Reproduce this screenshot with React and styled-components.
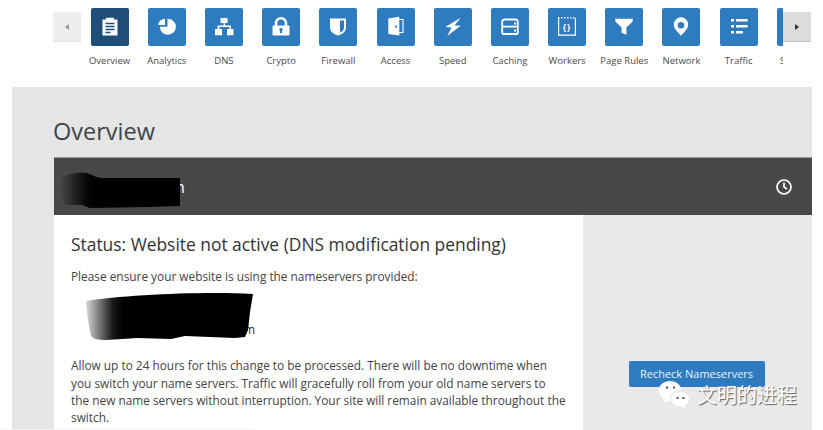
import React from 'react';
import styled, {createGlobalStyle} from 'styled-components';

const GlobalStyle = createGlobalStyle`
html, body {
  margin:0;
  padding:0;
  background:#fff;
  height:430px;
  overflow:hidden;
}
body {
  font-family:"Open Sans", "Noto Sans", sans-serif;
  color:#3d3d3d;
}
`
const Page = styled.div`
position:relative;
width:823px;
height:430px;
overflow:hidden;
`
const Nav = styled.nav`
display:flex;
height:87px;
padding-left:53px;
`
const Arrow = styled.button`
flex:none;
width:28px;
height:30px;
margin-top:12px;
padding:0;
display:flex;
align-items:center;
justify-content:center;
border:0;
border-bottom:1px solid ${props => props.$active ? '#bdbdbd' : '#e2e2e2'};
background:${props => props.$active ? '#dcdcdc' : '#eeeeee'};
`
const Triangle = styled.span`
width:0;
height:0;
border-top:3px solid transparent;
border-bottom:3px solid transparent;
${props => props.$right
  ? 'border-left:4px solid #333;'
  : 'border-right:4px solid #999;'}
`
const Scroller = styled.div`
flex:none;
width:702px;
display:flex;
overflow:hidden;
`
const NavItem = styled.div`
flex:none;
width:57.2px;
display:flex;
flex-direction:column;
align-items:center;
padding-top:8px;
`
const IconBox = styled.div`
width:38px;
height:38px;
border-radius:2px;
background:${props => props.$active ? '#1f4e79' : '#2f7bbf'};
`
const NavLabel = styled.span`
margin-top:7px;
font-size:9.5px;
line-height:16px;
white-space:nowrap;
color:#4a4a4a;
`
const Panel = styled.main`
width:759px;
height:343px;
margin-left:12px;
padding-left:41px;
background:#e5e5e5;
`
const Title = styled.h1`
margin:0;
padding-top:28px;
height:42px;
font-size:23.5px;
line-height:33px;
font-weight:400;
color:#3f4548;
`
const CardHeader = styled.header`
position:relative;
display:flex;
align-items:center;
justify-content:space-between;
box-sizing:border-box;
width:758px;
height:58px;
margin-left:1px;
padding:0 19px 0 121px;
background:#484848;
border-top:1px solid #9a9a9a;
color:#fff;
font-size:16px;
`
const CardBody = styled.section`
display:flex;
width:758px;
margin-left:1px;
`
const Content = styled.div`
box-sizing:border-box;
width:529px;
height:216px;
padding:17px 17px 0;
background:#fff;
font-size:11.85px;
line-height:17.3px;
color:#444;
`
const Status = styled.h2`
margin:0 0 12px;
font-size:17.4px;
line-height:24px;
font-weight:400;
color:#333;
`
const Text = styled.p`
margin:0;
`
const Servers = styled.div`
position:relative;
height:64px;
margin:4px 0 4px;
`
const Side = styled.aside`
flex:1;
height:216px;
display:flex;
justify-content:center;
padding-right:2px;
background:#e9e9e9;
`
const Recheck = styled.button`
width:136px;
height:26px;
margin-top:146px;
padding:0 0 2px;
border:0;
border-radius:2px;
background:#2f7bbf;
color:#e8f2fa;
font-family:inherit;
font-size:11px;
`
const Scribble = styled.svg`
position:absolute;
display:block;
left:${props => props.$left}px;
top:${props => props.$top}px;
`
const Watermark = styled.div`
position:absolute;
left:658px;
top:380px;
display:flex;
align-items:center;
gap:7px;
color:#fff;
font-family:"Noto Sans CJK SC", sans-serif;
font-size:20px;
line-height:28px;
text-shadow:1px 1px 1px rgba(0,0,0,.6);
`
const BottomEdge = styled.div`
position:absolute;
left:0;
bottom:0;
width:255px;
height:1px;
background:#f4f4f4;
`

const w = '#fff'
const b = '#2f7bbf'

const icons = {
  overview: (active) => (
    <>
      <path fill={w} d="M11.500 11.500h3.500v-1.800h8v1.800h3.500v16h-15z"/>
      <path stroke={active} strokeWidth="1.300" d="M14.500 15.500h9M14.500 18.500h9M14.500 21.500h9M14.500 24.500h5"/>
    </>
  ),
  analytics: () => (
    <>
      <path fill={w} d="M17 10.700a6.700 6.700 0 0 0-6.700 6.400h6.700z"/>
      <path fill={w} d="M19.500 10.800a8 8 0 1 1-7.600 8h7.600z"/>
    </>
  ),
  dns: () => (
    <path fill={w} d="M15.500 10h7v5h-2.600v2.600h6.100v3.400h2.500v6.200h-6.500v-6.200h2.500v-1.900h-10v1.900h2.500v6.200H10v-6.200h2.500v-3.400h6.100V15h-3.100z"/>
  ),
  crypto: () => (
    <>
      <path fill="none" stroke={w} strokeWidth="2.600" d="M14 18.500v-3.200a5 5 0 0 1 10 0v3.200"/>
      <rect fill={w} x="10.500" y="17.500" width="17" height="10" rx="1"/>
      <path fill={b} d="M19 20a1.700 1.700 0 0 1 1 3.100v2h-2v-2a1.700 1.700 0 0 1 1-3.100z"/>
    </>
  ),
  firewall: () => (
    <>
      <path fill={w} d="M11 10.500h16v9c0 4-3.500 6.700-8 8-4.500-1.300-8-4-8-8z"/>
      <path fill={b} d="M21 12.500h4v7c0 2.500-1.700 4.200-4 5.300z"/>
    </>
  ),
  access: () => (
    <>
      <path fill={w} d="M11.300 10.500l11-1.700v18.600l-11-1.300z"/>
      <path fill="none" stroke={w} strokeWidth="1.100" d="M22 11.500h4v13h-4"/>
      <circle fill={b} cx="19" cy="18.700" r="1.100"/>
    </>
  ),
  speed: () => (
    <path fill={w} d="M26.700 9.700L11.300 19l6.200.5L13.300 28l13.400-10.200-6.200-.3z"/>
  ),
  caching: () => (
    <>
      <path fill="none" stroke={w} strokeWidth="1.800" d="M13.500 11.500h11a2.300 2.300 0 0 1 2.300 2.300v10.900a1.300 1.300 0 0 1-1.300 1.300h-13a1.300 1.300 0 0 1-1.300-1.300V13.800a2.300 2.300 0 0 1 2.300-2.300zM11.200 18.700h15.600"/>
      <path fill={w} d="M23 14.500h2v2h-2zM23 21.500h2v2h-2z"/>
    </>
  ),
  workers: () => (
    <>
      <path fill="none" stroke={w} strokeWidth="1.200" d="M10.600 10v17.200h16.800V10"/>
      <path fill="none" stroke={w} strokeWidth="1.400" strokeDasharray="1.500 1.500" d="M10 9.700h18"/>
      <text x="19" y="22" textAnchor="middle" fill={w} fontFamily="Open Sans, sans-serif" fontWeight="700" fontSize="8.500" letterSpacing="1">{'{}'}</text>
    </>
  ),
  pagerules: () => (
    <path fill={w} d="M10.300 10.700h17.400v2.800l-6.300 6v7.300l-4.800-2v-5.300l-6.300-6z"/>
  ),
  network: () => (
    <path fill={w} fillRule="evenodd" d="M19 9.300a7.200 7.200 0 0 1 7.200 7.200c0 4.500-4.500 8-7.200 11.200-2.700-3.200-7.200-6.700-7.200-11.200A7.200 7.200 0 0 1 19 9.300zm0 4.700a3.300 3.300 0 1 0 0 6.600 3.300 3.300 0 0 0 0-6.600z"/>
  ),
  traffic: () => (
    <path fill={w} d="M11 11h3v2.400h-3zM16 11h11.700v2.400H16zM11 17h3v2.400h-3zM16 17h11.700v2.400H16zM11 23h3v2.400h-3zM16 23h7v2.400h-7z"/>
  ),
}

const items = [
  {key:'overview', label:'Overview', active:true},
  {key:'analytics', label:'Analytics'},
  {key:'dns', label:'DNS'},
  {key:'crypto', label:'Crypto'},
  {key:'firewall', label:'Firewall'},
  {key:'access', label:'Access'},
  {key:'speed', label:'Speed'},
  {key:'caching', label:'Caching'},
  {key:'workers', label:'Workers'},
  {key:'pagerules', label:'Page Rules'},
  {key:'network', label:'Network'},
  {key:'traffic', label:'Traffic'},
  {key:'more', label:'Stream'},
]

function App() {
  return (
    <Page>
      <GlobalStyle/>
      <Nav>
        <Arrow><Triangle/></Arrow>
        <Scroller>
          {items.map(item => (
            <NavItem key={item.key}>
              <IconBox $active={item.active}>
                <svg width="38" height="38" viewBox="0 0 38 38">
                  {icons[item.key] && icons[item.key](item.active ? '#1f4e79' : b)}
                </svg>
              </IconBox>
              <NavLabel>{item.label}</NavLabel>
            </NavItem>
          ))}
        </Scroller>
        <Arrow $active><Triangle $right/></Arrow>
      </Nav>
      <Panel>
        <Title>Overview</Title>
        <CardHeader>
          <span>n</span>
          <svg width="18" height="18" viewBox="0 0 18 18" fill="none" stroke="#fff" strokeWidth="1.700">
            <circle cx="9" cy="9" r="7"/>
            <path d="M9 4.500V9l3 2"/>
          </svg>
          <Scribble $left={4} $top={13} width="124" height="40" viewBox="0 0 124 40">
            <defs>
              <linearGradient id="fade" x1="0" x2="1" y1="0" y2="0">
                <stop offset="0" stopColor="#000" stopOpacity="0"/>
                <stop offset=".22" stopColor="#000" stopOpacity=".9"/>
                <stop offset=".3" stopColor="#000"/>
              </linearGradient>
            </defs>
            <path fill="url(#fade)" d="M2 8C8 3 18 1 28 2c6 1 10 5 16 5h78v28l-32 1-58 1-8-3H8C3 30 1 18 2 8z"/>
          </Scribble>
        </CardHeader>
        <CardBody>
          <Content>
            <Status>Status: Website not active (DNS modification pending)</Status>
            <Text>Please ensure your website is using the nameservers provided:</Text>
            <Servers>
              <Scribble $left={13} $top={2} width="172" height="58" viewBox="0 0 172 58">
                <defs>
                  <linearGradient id="fade2" x1="0" x2="1" y1="0" y2="0">
                    <stop offset="0" stopColor="#000" stopOpacity=".15"/>
                    <stop offset=".16" stopColor="#000" stopOpacity=".9"/>
                    <stop offset=".22" stopColor="#000"/>
                  </linearGradient>
                </defs>
                <text x="160" y="43" fill="#1c3a57" fontFamily="Open Sans, sans-serif" fontSize="12">m</text>
                <path fill="url(#fade2)" d="M2 10C40 4 120 0 169 3l-3 18-2 18-3 7-10 1-50-2-14 3-34-1-30 2c-10 0-14-1-16-4-3-12-4-24-5-35z"/>
              </Scribble>
            </Servers>
            <Text>Allow up to 24 hours for this change to be processed. There will be no downtime when you switch your name servers. Traffic will gracefully roll from your old name servers to the new name servers without interruption. Your site will remain available throughout the switch.</Text>
          </Content>
          <Side>
            <Recheck>Recheck Nameservers</Recheck>
          </Side>
        </CardBody>
      </Panel>
      <Watermark>
        <svg width="32" height="30" viewBox="0 0 32 30">
          <path fill="#fff" d="M12 1c6 0 11 3.800 11 8.500 0 .3 0 .6-.1.900-5.700-.6-10.900 3-10.900 8 0 .9.200 1.700.5 2.500-.7.100-1.500.1-2.200 0L6 23l.8-3.700C3 17.800 1 14 1 9.500 1 4.800 6 1 12 1z"/>
          <path fill="#fff" d="M22 12c4.800 0 9 3 9 7 0 2.600-1.800 4.800-4.300 6.100l.8 3.900-4-2.900c-.5.100-1 .1-1.500.1-4.800 0-8.700-3.200-8.700-7.100S17.200 12 22 12z"/>
          <path fill="#555" d="M8 6.500h2v2H8zM15 6.500h2v2h-2zM18.500 17h2v2h-2zM24.500 17h2v2h-2z"/>
        </svg>
        文明的进程
      </Watermark>
      <BottomEdge/>
    </Page>
  )
}

export default App
